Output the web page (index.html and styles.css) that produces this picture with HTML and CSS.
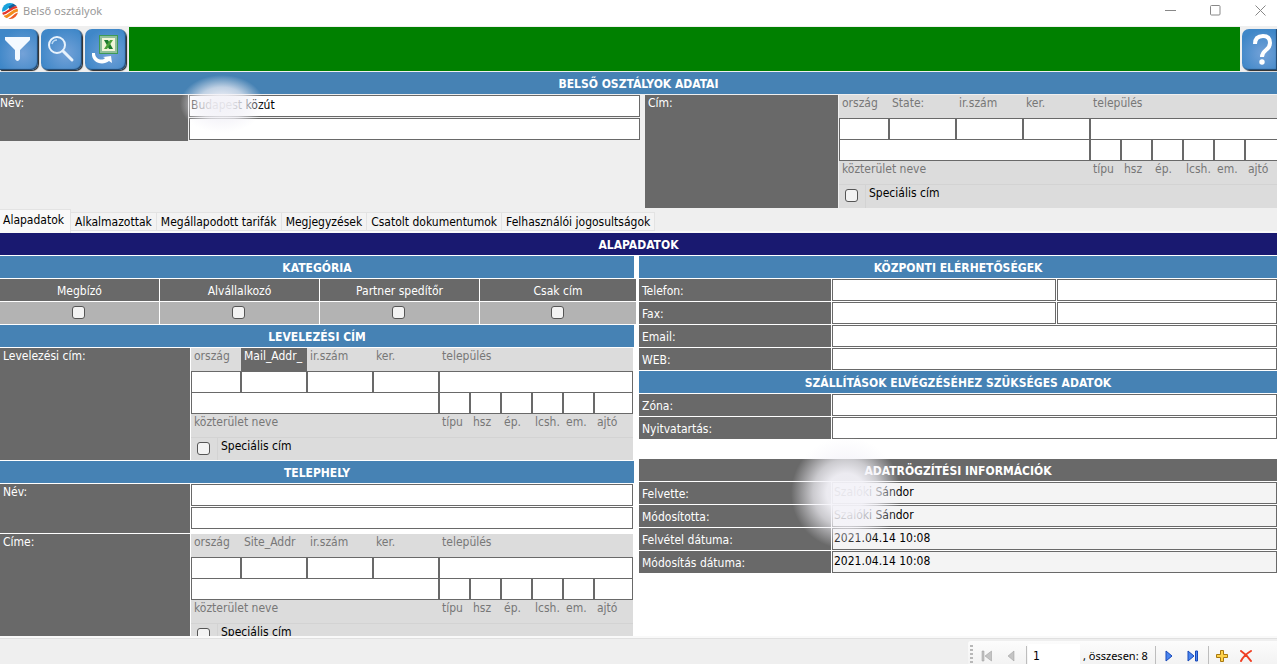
FILE: index.html
```html
<!DOCTYPE html>
<html lang="hu">
<head>
<meta charset="utf-8">
<title>Belső osztályok</title>
<link rel="stylesheet" href="styles.css">
</head>
<body>
<div class="window">
  <header class="titlebar">
    <svg class="app-icon" viewBox="0 0 18 18" aria-hidden="true">
      <defs><clipPath id="disc"><circle cx="9" cy="9" r="8"/></clipPath></defs>
      <g clip-path="url(#disc)" fill="none">
        <rect width="18" height="18" fill="#fff"/>
        <path d="M-1 7C5 7 5 2 12 0" stroke="#1ba3dc" stroke-width="6"/>
        <path d="M8 6C11 5 12 3 16 2" stroke="#17619c" stroke-width="3"/>
        <path d="M0 12C8 12 8 5 18 4.500" stroke="#e5372b" stroke-width="2.400"/>
        <path d="M2 15.500C10 15 10 8 18 8" stroke="#f28c1c" stroke-width="3"/>
        <path d="M6 18.500C13 18 12 12 19 11.500" stroke="#ee5a24" stroke-width="2.600"/>
      </g>
    </svg>
    <h1 class="title">Belső osztályok</h1>
    <div class="window-buttons">
      <button type="button" aria-label="Kis méret"><svg viewBox="0 0 11 11"><path d="M0 5.500h11"/></svg></button>
      <button type="button" aria-label="Teljes méret"><svg viewBox="0 0 11 11"><rect x=".5" y=".5" width="9.500" height="9.500" rx="1"/></svg></button>
      <button type="button" aria-label="Bezárás"><svg viewBox="0 0 11 11"><path d="M.5.5l10 10M10.500.5l-10 10"/></svg></button>
    </div>
  </header>

  <div class="toolbar">
    <div class="tools">
      <button type="button" class="tool tool-first" aria-label="Szűrés">
        <svg viewBox="0 0 40 40"><path d="M8 7h25v3L23 20v9q-2.500 4-5 0v-9L8 10z" fill="#f4f9ff"/></svg>
      </button>
      <button type="button" class="tool" aria-label="Keresés">
        <svg viewBox="0 0 40 40" fill="none" stroke="#e8f2fc"><circle cx="16" cy="15" r="8" stroke-width="2"/><path d="M11 14q1-4 5-4" stroke="#bcd8f2" stroke-width="1.500"/><path d="M22 21l9 9" stroke-width="3" stroke-linecap="round"/></svg>
      </button>
      <button type="button" class="tool" aria-label="Exportálás Excelbe">
        <svg viewBox="0 0 40 40"><rect x="14.500" y="5.500" width="18" height="18" fill="#8fbe9b" stroke="#3f9a55"/><rect x="17" y="8" width="13" height="13" fill="#f0f5d8"/><path d="M19 10h4l5 9h-4z" fill="#1b7a2c"/><path d="M28 10h-3l-6 9h3z" fill="#4aa03a"/><path d="M7 23h3c0 7 8 8 10 5l-2-1 8-1 1 7-3-2c-6 5-18 2-17-8z" fill="#fff"/></svg>
      </button>
    </div>
    <div class="toolbar-fill"></div>
    <button type="button" class="tool tool-last" aria-label="Súgó">
      <svg viewBox="0 0 40 40"><path d="M13 14q0-8 8-8 7 0 7 7 0 4-4 7-4 3-4 7" fill="none" stroke="#fff" stroke-width="4"/><circle cx="20" cy="32" r="2.700" fill="#fff"/></svg>
    </button>
  </div>

  <h2 class="band">BELSŐ OSZTÁLYOK ADATAI</h2>
  <section class="summary">
    <div class="name-block">
      <label class="caption caption-flush" for="name">Név:</label>
      <div class="stack stack-main">
        <input class="box" id="name" value="Budapest közút">
        <input class="box" aria-label="Név, második sor">
      </div>
      <div class="smudge smudge-name"></div>
    </div>
    <div class="main-address">
      <div class="caption">Cím:</div>
      <div class="address address-wide address-open">
        <label for="a1">ország</label><label for="a2">State:</label><label for="a3">ir.szám</label><label for="a4">ker.</label><label class="town" for="a5">település</label>
        <input id="a1"><input id="a2"><input id="a3"><input id="a4"><input id="a5" class="town">
        <input id="a6" class="street low"><input id="a7" class="low"><input id="a8" class="low"><input id="a9" class="low"><input id="a10" class="low"><input id="a11" class="low"><input id="a12" class="low edge">
        <label class="street" for="a6">közterület neve</label><label for="a7">típu</label><label for="a8">hsz</label><label for="a9">ép.</label><label for="a10">lcsh.</label><label for="a11">em.</label><label for="a12">ajtó</label>
        <div class="special"><span class="tick"><input type="checkbox" id="a13"></span><label for="a13">Speciális cím</label></div>
      </div>
    </div>
  </section>

  <nav class="tabs" role="tablist">
    <button type="button" class="tab tab-active" role="tab" aria-selected="true">Alapadatok</button>
    <button type="button" class="tab" role="tab">Alkalmazottak</button>
    <button type="button" class="tab" role="tab">Megállapodott tarifák</button>
    <button type="button" class="tab" role="tab">Megjegyzések</button>
    <button type="button" class="tab" role="tab">Csatolt dokumentumok</button>
    <button type="button" class="tab" role="tab">Felhasználói jogosultságok</button>
  </nav>

  <main class="page">
    <h2 class="band band-navy">ALAPADATOK</h2>
    <div class="columns">
      <section class="column">
        <h3 class="band">KATEGÓRIA</h3>
        <div class="categories">
          <label><span>Megbízó</span><span class="cell"><input type="checkbox"></span></label>
          <label><span>Alvállalkozó</span><span class="cell"><input type="checkbox"></span></label>
          <label><span>Partner spedítőr</span><span class="cell"><input type="checkbox"></span></label>
          <label><span>Csak cím</span><span class="cell"><input type="checkbox"></span></label>
        </div>
        <h3 class="band">LEVELEZÉSI CÍM</h3>
        <div class="group">
          <div class="caption">Levelezési cím:</div>
          <div class="address">
            <label for="m1">ország</label><label class="marked" for="m2">Mail_Addr_</label><label for="m3">ir.szám</label><label for="m4">ker.</label><label class="town" for="m5">település</label>
            <input id="m1"><input id="m2"><input id="m3"><input id="m4"><input id="m5" class="town">
            <input id="m6" class="street low"><input id="m7" class="low"><input id="m8" class="low"><input id="m9" class="low"><input id="m10" class="low"><input id="m11" class="low"><input id="m12" class="low edge">
            <label class="street" for="m6">közterület neve</label><label for="m7">típu</label><label for="m8">hsz</label><label for="m9">ép.</label><label for="m10">lcsh.</label><label for="m11">em.</label><label for="m12">ajtó</label>
            <div class="special"><span class="tick"><input type="checkbox" id="m13"></span><label for="m13">Speciális cím</label></div>
          </div>
        </div>
        <h3 class="band">TELEPHELY</h3>
        <div class="group">
          <label class="caption" for="site">Név:</label>
          <div class="stack stack-padded">
            <input class="box" id="site">
            <input class="box" aria-label="Telephely neve, második sor">
          </div>
        </div>
        <div class="group">
          <div class="caption">Címe:</div>
          <div class="address">
            <label for="s1">ország</label><label for="s2">Site_Addr</label><label for="s3">ir.szám</label><label for="s4">ker.</label><label class="town" for="s5">település</label>
            <input id="s1"><input id="s2"><input id="s3"><input id="s4"><input id="s5" class="town">
            <input id="s6" class="street low"><input id="s7" class="low"><input id="s8" class="low"><input id="s9" class="low"><input id="s10" class="low"><input id="s11" class="low"><input id="s12" class="low edge">
            <label class="street" for="s6">közterület neve</label><label for="s7">típu</label><label for="s8">hsz</label><label for="s9">ép.</label><label for="s10">lcsh.</label><label for="s11">em.</label><label for="s12">ajtó</label>
            <div class="special"><span class="tick"><input type="checkbox" id="s13"></span><label for="s13">Speciális cím</label></div>
          </div>
        </div>
      </section>

      <section class="column">
        <h3 class="band">KÖZPONTI ELÉRHETŐSÉGEK</h3>
        <div class="row row-pair"><label for="tel">Telefon:</label><input class="box" id="tel"><input class="box" aria-label="Telefon 2"></div>
        <div class="row row-pair"><label for="fax">Fax:</label><input class="box" id="fax"><input class="box" aria-label="Fax 2"></div>
        <div class="row"><label for="mail">Email:</label><input class="box" id="mail"></div>
        <div class="row"><label for="web">WEB:</label><input class="box" id="web"></div>
        <h3 class="band">SZÁLLÍTÁSOK ELVÉGZÉSÉHEZ SZÜKSÉGES ADATOK</h3>
        <div class="row"><label for="zone">Zóna:</label><input class="box" id="zone"></div>
        <div class="row"><label for="open">Nyitvatartás:</label><input class="box" id="open"></div>
        <div class="record">
          <h3 class="band band-gray">ADATRÖGZÍTÉSI INFORMÁCIÓK</h3>
          <div class="row"><label for="by">Felvette:</label><input class="box" id="by" value="Szalóki Sándor" readonly></div>
          <div class="row"><label for="mod">Módosította:</label><input class="box" id="mod" value="Szalóki Sándor" readonly></div>
          <div class="row"><label for="on">Felvétel dátuma:</label><input class="box" id="on" value="2021.04.14 10:08" readonly></div>
          <div class="row"><label for="modon">Módosítás dátuma:</label><input class="box" id="modon" value="2021.04.14 10:08" readonly></div>
          <div class="smudge smudge-record"></div>
        </div>
      </section>
    </div>
  </main>

  <footer class="statusbar">
    <div class="pager">
      <span class="grip"></span>
      <button type="button" aria-label="Első"><svg viewBox="0 0 12 12"><path d="M1 1h2v10H1zM10.500 1v10L4 6z" fill="#c4c4c4" stroke="#999" stroke-width=".5"/></svg></button>
      <button type="button" aria-label="Előző"><svg viewBox="0 0 12 12"><path d="M9 1v10L3 6z" fill="#c4c4c4" stroke="#999" stroke-width=".5"/></svg></button>
      <span class="divider"></span>
      <input class="page-number" value="1" aria-label="Rekord">
      <span class="total">, összesen: 8</span>
      <span class="divider"></span>
      <button type="button" aria-label="Következő"><svg viewBox="0 0 12 12"><path d="M3 1v10l6-5z" fill="#4a86f0" stroke="#1848b8"/></svg></button>
      <button type="button" aria-label="Utolsó"><svg viewBox="0 0 12 12"><path d="M1 1v10l6-5zM8.500 1h2v10h-2z" fill="#4a86f0" stroke="#1848b8"/></svg></button>
      <span class="divider"></span>
      <button type="button" aria-label="Új"><svg viewBox="0 0 12 12"><path d="M4.500.5h3v4h4v3h-4v4h-3v-4h-4v-3h4z" fill="#ffd24a" stroke="#a87810"/></svg></button>
      <button type="button" aria-label="Törlés"><svg viewBox="0 0 12 12"><path d="M1 1q6 4 10 10M11 1Q4 5 1 11" fill="none" stroke="#ef3e23" stroke-width="2" stroke-linecap="round"/></svg></button>
    </div>
  </footer>
</div>
</body>
</html>
```
FILE: styles.css
```css
* { box-sizing: border-box; }

body {
  margin: 0;
  font: 12px/16px "DejaVu Sans Condensed", "Noto Sans", sans-serif;
  color: #000;
}

input, button { font: inherit; color: inherit; margin: 0; border-radius: 0; }
button { border: 0; padding: 0; background: none; }
svg { display: block; }

.window {
  display: flex;
  flex-direction: column;
  height: 100vh;
  overflow: hidden;
  background: #efefef;
}

/* Title bar */
.titlebar {
  display: flex;
  flex: none;
  align-items: center;
  height: 26px;
  padding: 0 11px 5px 1px;
  background: #fff;
}
.app-icon { width: 18px; height: 18px; }
.title {
  margin: 0 auto 0 4px;
  font: 11px/16px "Noto Sans", sans-serif;
  color: #999;
}
.window-buttons { display: flex; gap: 34px; }
.window-buttons svg { width: 11px; height: 11px; fill: none; stroke: #888; }

/* Toolbar */
.toolbar {
  display: flex;
  flex: none;
  gap: 2px;
  height: 46px;
  padding: 1px 0;
}
.tools { display: flex; gap: 3px; padding-top: 2px; }
.tool {
  width: 41px;
  height: 41px;
  border-radius: 7px;
  background: radial-gradient(circle at 60% 60%, #74a2d8, #3f87c8 75%);
  box-shadow: inset -1px -1px 1px #22486e, 1px 1px 1px #222;
}
.tool svg { width: 40px; height: 40px; }
.tool-first { width: 38px; border-radius: 0 7px 7px 0; }
.tool-first svg { margin-left: -3px; }
.toolbar-fill { flex: 1; margin-left: 1px; background: green; }
.tool-last {
  width: 35px;
  margin-top: 2px;
  border-radius: 7px 0 0 7px;
}

/* Section headings */
.band {
  flex: none;
  height: 22px;
  margin: 0;
  font: bold 12px/24px "DejaVu Sans Condensed", "Noto Sans", sans-serif;
  text-align: center;
  color: #fff;
  background: #4682b4;
}
.band-navy { background: #191970; }
.band-gray { background: #696969; }

/* Captions and text boxes */
.caption { padding-left: 3px; color: #fff; background: #696969; }
.caption-flush { padding-left: 0; }
.box {
  width: 100%;
  min-width: 0;
  height: 22px;
  padding: 0 1px 2px;
  border: 1px solid #696969;
  background: #fff;
}
.box[readonly] { background: #f4f4f4; }
.stack { display: grid; gap: 1px; align-content: start; }
.stack-main { padding-bottom: 1px; }
.stack-padded { padding: 0 1px 4px 0; }

.summary {
  display: grid;
  flex: none;
  grid-template-columns: 640fr 632fr;
  gap: 5px;
  padding: 1px 0;
}
.name-block {
  position: relative;
  display: grid;
  grid-template-columns: 188px 1fr;
  gap: 1px;
  align-self: start;
}
.main-address { display: grid; grid-template-columns: 193px 1fr; gap: 1px; }

/* Address editor */
.address {
  display: grid;
  grid-template-columns: 50px repeat(3, 66px) repeat(5, 31px) 1fr;
  grid-template-rows: 23px 22px 21px 23px 23px;
  margin-right: 1px;
  color: #777;
  background: #dcdcdc;
}
.address-wide {
  grid-template-columns: 50px repeat(3, 67px) repeat(5, 31px) 1fr;
  grid-template-rows: 23px 22px 21px 23px 24px;
  margin-right: 0;
}
.address label { padding-left: 3px; white-space: nowrap; overflow: hidden; }
.address .marked { color: #fff; background: #696969; }
.address > input { width: 100%; min-width: 0; padding: 0 2px; border: 1px solid #696969; background: #fff; }
.address > .low { border-top: 0; }
.address-open > .town, .address-open > .edge { border-right: 0; }
.town { grid-column: span 6; }
.street { grid-column: span 4; }
.special {
  display: grid;
  grid-column: 1 / -1;
  grid-template-columns: 27px 1fr;
  border-top: 1px solid #d3d3d3;
  color: #000;
}
.tick { padding: 4px 0 0 6px; border-right: 1px solid #d3d3d3; }

input[type="checkbox"] {
  appearance: none;
  display: block;
  width: 13px;
  height: 13px;
  border: 1px solid #555;
  border-radius: 3px;
  background: #f3f3f3;
}

/* Tabs */
.tabs { display: flex; flex: none; align-items: flex-end; height: 24px; padding-bottom: 2px; background: linear-gradient(#efefef 22px, #f9f9f9 22px); }
.tab {
  height: 19px;
  padding: 0 4px;
  border: 1px solid #e3e3e3;
  border-left: 0;
  white-space: nowrap;
  background: #f3f3f3;
}
.tab-active {
  height: 24px;
  margin-bottom: -2px;
  padding: 0 6px 4px 3px;
  border-bottom: 0;
  background: #f9f9f9;
}

/* Tab page */
.page { flex: 1; min-height: 0; overflow: hidden; background: #fff; }
.columns {
  display: grid;
  grid-template-columns: 634fr 638fr;
  gap: 5px;
  padding-top: 1px;
}
.column { display: grid; gap: 1px; align-content: start; min-width: 0; }
.group { display: grid; grid-template-columns: 190px 1fr; gap: 1px; }
.categories {
  display: grid;
  grid-template-columns: 159fr 159fr 159fr 156fr;
  gap: 1px;
  margin-right: -2px;
}
.categories label {
  display: grid;
  grid-template-rows: 22px 22px;
  gap: 1px;
  line-height: 24px;
  text-align: center;
}
.categories span { color: #fff; background: #696969; }
.categories .cell { display: grid; place-items: center; padding: 0 2px 2px 0; background: #b3b3b3; }

.row { display: grid; grid-template-columns: 192px 1fr; gap: 1px; }
.row-pair { grid-template-columns: 192px 224fr 220fr; }
.row label { height: 22px; padding-left: 3px; line-height: 24px; color: #fff; background: #696969; }
.record { position: relative; display: grid; gap: 1px; margin-top: 19px; }

/* Soft white clouds laid over personal data */
.smudge { position: absolute; pointer-events: none; }
.smudge-name {
  left: 180px;
  top: -20px;
  width: 84px;
  height: 58px;
  background: radial-gradient(closest-side, rgba(243, 242, 248, .93) 25%, rgba(243, 242, 248, .7) 58%, rgba(243, 242, 248, 0));
}
.smudge-record {
  left: 152px;
  top: -22px;
  width: 110px;
  height: 112px;
  background: radial-gradient(closest-side, rgba(244, 243, 249, .94) 35%, rgba(244, 243, 249, .7) 60%, rgba(244, 243, 249, 0));
}

/* Record navigator */
.statusbar {
  display: flex;
  flex: none;
  justify-content: flex-end;
  height: 28px;
  padding-top: 3px;
  border-top: 2px solid #f9f9f9;
  overflow: hidden;
  box-shadow: inset 0 1px #e0e0e0;
}
.pager {
  display: flex;
  align-items: center;
  width: 309px;
  height: 30px;
  padding-left: 2px;
  border-radius: 3px 0 0 0;
  background: linear-gradient(#fcfcfc, #f0f0f0);
}
.pager button { padding: 0 6px; }
.pager svg { width: 12px; height: 12px; }
.grip { width: 3px; height: 22px; margin-right: 2px; background: repeating-linear-gradient(#b8b8b8 0 2px, transparent 2px 4px); }
.divider { width: 1px; height: 20px; margin: 0 1px 0 3px; background: #bdbdbd; }
.page-number { width: 52px; height: 24px; padding: 0 5px; border: 0; background: #fff; }
.total { margin: 0 4px 0 3px; font: 11px/18px "Noto Sans", sans-serif; white-space: nowrap; }
```
